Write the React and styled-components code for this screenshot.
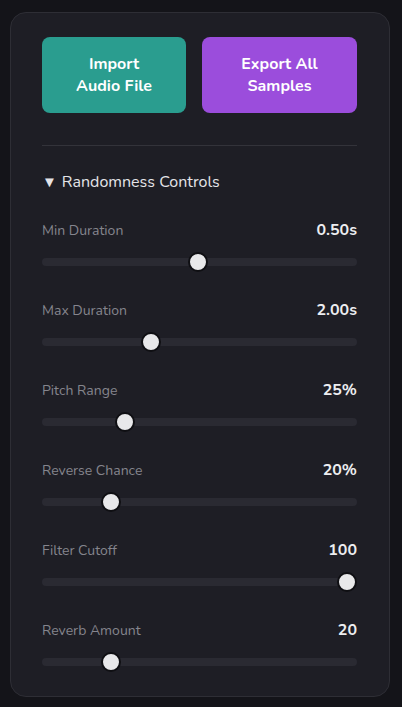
import React from 'react';
import styled, { createGlobalStyle } from 'styled-components';

const GlobalStyle = createGlobalStyle`
  body {
    margin: 0;
    background: #141419;
    font-family: Nunito, Lato, "Noto Sans", sans-serif;
  }
`;

const Panel = styled.div`
  box-sizing: border-box;
  width: 380px;
  margin: 12px 0 0 10px;
  padding: 24px 32px 25px 31px;
  background: #1e1e25;
  border: 1px solid #2e2e35;
  border-radius: 16px;
`;

const ButtonRow = styled.div`
  display: grid;
  grid-template-columns: 144px 155px;
  gap: 16px;
`;

const ActionButton = styled.button`
  height: 76px;
  border: none;
  border-radius: 8px;
  background: ${p => p.color};
  color: #ffffff;
  font-family: inherit;
  font-size: 16px;
  font-weight: 700;
  line-height: 22px;
`;

const Divider = styled.hr`
  margin: 32px 0 0;
  border: none;
  border-top: 1px solid #33333a;
`;

const Heading = styled.div`
  margin-top: 26px;
  height: 20px;
  line-height: 20px;
  color: #e4e4e8;
  font-size: 16px;
  display: flex;
  align-items: center;
  gap: 5px;
`;

const Arrow = styled.span`
  font-size: 15px;
`;

const SliderList = styled.div`
  margin-top: 28px;
  display: flex;
  flex-direction: column;
  gap: 29px;
`;

const Group = styled.div`
  display: flex;
  flex-direction: column;
  gap: 13px;
`;

const LabelRow = styled.div`
  display: flex;
  justify-content: space-between;
  align-items: center;
  height: 20px;
`;

const Label = styled.span`
  color: #85858d;
  font-size: 14px;
`;

const Value = styled.span`
  color: #ededf0;
  font-size: 16px;
  font-weight: 700;
`;

const Range = styled.input`
  -webkit-appearance: none;
  appearance: none;
  width: 100%;
  height: 18px;
  margin: 0;
  background: transparent;

  &::-webkit-slider-runnable-track {
    height: 8px;
    border-radius: 4px;
    background: #2a2a32;
  }
  &::-webkit-slider-thumb {
    -webkit-appearance: none;
    width: 20px;
    height: 20px;
    margin-top: -6px;
    border-radius: 50%;
    background: #e8e8ea;
    border: 2px solid #0f0f13;
    box-sizing: border-box;
  }
`;

const sliders = [
  { label: 'Min Duration', value: '0.50s', pos: 49.4 },
  { label: 'Max Duration', value: '2.00s', pos: 33.4 },
  { label: 'Pitch Range', value: '25%', pos: 24.7 },
  { label: 'Reverse Chance', value: '20%', pos: 20 },
  { label: 'Filter Cutoff', value: '100', pos: 100 },
  { label: 'Reverb Amount', value: '20', pos: 20 },
];

export default function App() {
  return (
    <>
      <GlobalStyle />
      <Panel>
        <ButtonRow>
          <ActionButton color="#2a9d8f">Import<br />Audio File</ActionButton>
          <ActionButton color="#9b4ddc">Export All<br />Samples</ActionButton>
        </ButtonRow>
        <Divider />
        <Heading><Arrow>▼</Arrow>Randomness Controls</Heading>
        <SliderList>
          {sliders.map(s => (
            <Group key={s.label}>
              <LabelRow>
                <Label>{s.label}</Label>
                <Value>{s.value}</Value>
              </LabelRow>
              <Range type="range" min="0" max="100" step="0.1" defaultValue={s.pos} />
            </Group>
          ))}
        </SliderList>
      </Panel>
    </>
  );
}
